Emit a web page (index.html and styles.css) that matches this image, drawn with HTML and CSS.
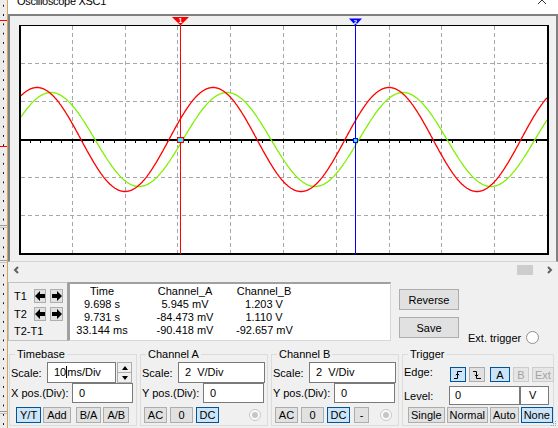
FILE: index.html
```html
<!DOCTYPE html>
<html>
<head>
    <meta charset="UTF-8">
    <title>Oscilloscope XSC1</title>
    <link rel="stylesheet" href="styles.css">
</head>
<body>
    <div class="canvas">
        <div class="wire wire-top"></div>
        <div class="wire wire-mid"></div>
        <div class="pin pin-1"></div>
        <div class="pin pin-2"></div>
        <div class="pin pin-3"></div>
    </div>

    <div class="window">
        <div class="titlebar">
            <span class="title">Oscilloscope XSC1</span>
            <svg class="close" width="10" height="4" viewBox="0 0 10 4"><path d="M0.5 4.5L5 0L9.5 4.5"/></svg>
        </div>

        <div class="screen">
            <svg class="scope" width="546" height="245" viewBox="10 16 546 245">
                <rect class="plot" x="19" y="25" width="530" height="230"/>
                <path class="grid" d="M72.5 26V253M125.5 26V253M177.5 26V253M230.5 26V253M283.5 26V253M336.5 26V253M389.5 26V253M441.5 26V253M494.5 26V253"/>
                <path class="grid" d="M21 63.5H547M21 101.5H547M21 177.5H547M21 215.5H547"/>
                <rect class="axis" x="21" y="139" width="526" height="2"/>
                <path id="ticks" class="ticks"/>
                <polyline id="waveB" class="wave-b"/>
                <polyline id="waveA" class="wave-a"/>
                <rect class="frame" x="19" y="25" width="530" height="1"/>
                <rect class="frame" x="19" y="25" width="2" height="230"/>
                <rect class="frame" x="547" y="25" width="2" height="230"/>
                <rect class="frame" x="19" y="253" width="530" height="2"/>

                <rect class="cur-1" x="180" y="17" width="1" height="237"/>
                <polygon class="cur-1" points="172,17 189,17 180.5,25.5"/>
                <text class="cur-num" x="180.5" y="23">1</text>
                <rect class="mark-1" x="177.5" y="137.5" width="6" height="5"/>

                <rect class="cur-2" x="355" y="19" width="1" height="235"/>
                <polygon class="cur-2" points="349,18.5 362,18.5 355.5,25.5"/>
                <text class="cur-num small" x="355.5" y="23.5">2</text>
                <rect class="mark-2" x="353.5" y="138.5" width="4" height="4"/>
            </svg>
        </div>

        <div class="hscroll">
            <svg class="chev" width="6" height="8" viewBox="0 0 6 8"><path d="M5 1L2 4L5 7"/></svg>
            <div class="thumb"></div>
            <svg class="chev chev-r" width="6" height="8" viewBox="0 0 6 8"><path d="M1 1L4 4L1 7"/></svg>
        </div>

        <div class="readout">
            <div class="cursors">
                <div class="crow">
                    <span class="clabel">T1</span>
                    <button class="arrow"><svg width="10" height="10" viewBox="0 0 10 10"><path d="M0 5L5 0V3H10V7H5V10Z"/></svg></button>
                    <button class="arrow"><svg width="10" height="10" viewBox="0 0 10 10"><path d="M10 5L5 0V3H0V7H5V10Z"/></svg></button>
                </div>
                <div class="crow">
                    <span class="clabel">T2</span>
                    <button class="arrow"><svg width="10" height="10" viewBox="0 0 10 10"><path d="M0 5L5 0V3H10V7H5V10Z"/></svg></button>
                    <button class="arrow"><svg width="10" height="10" viewBox="0 0 10 10"><path d="M10 5L5 0V3H0V7H5V10Z"/></svg></button>
                </div>
                <div class="cdiff">T2-T1</div>
            </div>

            <div class="values">
                <span>Time</span><span>Channel_A</span><span>Channel_B</span>
                <span>9.698 s</span><span>5.945 mV</span><span>1.203 V</span>
                <span>9.731 s</span><span>-84.473 mV</span><span>1.110 V</span>
                <span>33.144 ms</span><span>-90.418 mV</span><span>-92.657 mV</span>
            </div>

            <div class="actions">
                <button class="btn big">Reverse</button>
                <button class="btn big">Save</button>
            </div>

            <div class="ext"><span>Ext. trigger</span><span class="radio"></span></div>
        </div>

        <div class="controls">
            <fieldset class="group timebase">
                <legend>Timebase</legend>
                <div class="row row-scale">
                    <span class="lbl">Scale:</span>
                    <div class="field f-tb">10<span class="caret"></span>ms/Div</div>
                    <div class="spin"><span class="up"></span><span class="down"></span></div>
                </div>
                <div class="row row-pos">
                    <span class="lbl lbl-long">X pos.(Div):</span>
                    <div class="field f-pos">0</div>
                </div>
                <div class="row row-btns">
                    <button class="btn on">Y/T</button>
                    <button class="btn">Add</button>
                    <button class="btn sep">B/A</button>
                    <button class="btn">A/B</button>
                </div>
            </fieldset>

            <fieldset class="group channel">
                <legend>Channel A</legend>
                <div class="row row-scale">
                    <span class="lbl">Scale:</span>
                    <div class="field f-ch">2  V/Div</div>
                </div>
                <div class="row row-pos">
                    <span class="lbl lbl-long">Y pos.(Div):</span>
                    <div class="field f-pos">0</div>
                </div>
                <div class="row row-btns">
                    <button class="btn coupling">AC</button>
                    <button class="btn coupling">0</button>
                    <button class="btn coupling on">DC</button>
                    <span class="radio dis"></span>
                </div>
            </fieldset>

            <fieldset class="group channel">
                <legend>Channel B</legend>
                <div class="row row-scale">
                    <span class="lbl">Scale:</span>
                    <div class="field f-ch">2  V/Div</div>
                </div>
                <div class="row row-pos">
                    <span class="lbl lbl-long">Y pos.(Div):</span>
                    <div class="field f-pos">0</div>
                </div>
                <div class="row row-btns">
                    <button class="btn coupling">AC</button>
                    <button class="btn coupling">0</button>
                    <button class="btn coupling on">DC</button>
                    <button class="btn minus">-</button>
                    <span class="radio dis"></span>
                </div>
            </fieldset>

            <fieldset class="group trigger">
                <legend>Trigger</legend>
                <div class="row row-edge">
                    <span class="lbl lbl-trig">Edge:</span>
                    <button class="btn edge on"><svg width="10" height="11" viewBox="0 0 10 11"><path d="M1 9.5H4.5V2.5H9M2.8 6.2L4.5 4.5L6.2 6.2"/></svg></button>
                    <button class="btn edge"><svg width="10" height="11" viewBox="0 0 10 11"><path d="M1 2.5H4.5V9.5H9M2.8 5.8L4.5 7.5L6.2 5.8"/></svg></button>
                    <button class="btn src src-a on">A</button>
                    <button class="btn src off">B</button>
                    <button class="btn src off">Ext</button>
                </div>
                <div class="row row-level">
                    <span class="lbl lbl-trig">Level:</span>
                    <div class="field f-level">0</div>
                    <div class="field f-unit">V</div>
                </div>
                <div class="row row-btns">
                    <button class="btn mode">Single</button>
                    <button class="btn mode">Normal</button>
                    <button class="btn mode">Auto</button>
                    <button class="btn mode on">None</button>
                </div>
            </fieldset>
        </div>
    </div>

    <svg class="grip" width="7" height="7" viewBox="0 0 7 7">
        <rect x="5" y="1" width="1" height="1"/><rect x="3" y="3" width="1" height="1"/><rect x="5" y="3" width="1" height="1"/>
        <rect x="1" y="5" width="1" height="1"/><rect x="3" y="5" width="1" height="1"/><rect x="5" y="5" width="1" height="1"/>
    </svg>

    <script>
    // sine traces in page pixels: 10 ms/div, period ~ 3.33 div
    function wave(id, amp, zero) {
        var pts = [];
        for (var x = 21; x <= 547; x++) {
            var y = 139.5 - amp * Math.sin((x - zero) / 176 * 2 * Math.PI);
            pts.push(x + "," + y.toFixed(1));
        }
        document.getElementById(id).setAttribute("points", pts.join(" "));
    }
    wave("waveB", 47, 183);
    wave("waveA", 52, 169);

    var d = "";
    for (var k = 1; k < 50; k++) {
        var tx = Math.round(19 + k * 52.8 / 5) + 0.5;
        d += "M" + tx + " 141V143";
    }
    document.getElementById("ticks").setAttribute("d", d);
    </script>
</body>
</html>
```

FILE: styles.css
```css
* {
    box-sizing: border-box;
}

body {
    margin: 0;
    width: 558px;
    height: 428px;
    overflow: hidden;
    display: flex;
    position: relative;
    background: #f0f0f0;
    font-family: "Liberation Sans", Arial, sans-serif;
    font-size: 11px;
    color: #000;
}

/* schematic behind the window */
.canvas {
    flex: none;
    width: 7px;
    position: relative;
    background-color: #ececec;
    background-image: radial-gradient(circle at 3.5px 3.5px, #111 0.7px, transparent 1px);
    background-size: 7px 9.3px;
    background-position: 0 2px;
}

.wire {
    position: absolute;
    left: 0;
    width: 7px;
    height: 1px;
    background: #f00;
}

.wire-top { top: 20px; }
.wire-mid { top: 146px; }

.pin {
    position: absolute;
    left: 0;
    width: 7px;
    height: 3px;
    border-top: 1px solid #9a9a9a;
    border-bottom: 1px solid #c4c4c4;
}

.pin-1 { top: 225px; }
.pin-2 { top: 260px; }
.pin-3 { top: 411px; }

.window {
    flex: none;
    width: 551px;
    border-left: 1px solid #d9a15a;
    display: flex;
    flex-direction: column;
}

.titlebar {
    flex: none;
    height: 14px;
    background: #fff;
    display: flex;
    justify-content: space-between;
    overflow: hidden;
}

.title {
    margin: -6px 0 0 9px;
    line-height: 14px;
    letter-spacing: -0.3px;
}

.close {
    margin-right: 11px;
}

.close path {
    fill: none;
    stroke: #333;
    stroke-width: 1;
}

/* scope screen */
.screen {
    flex: none;
    height: 248px;
    border: 2px solid #808080;
    border-bottom: 1px solid #d4d4d4;
    background: #f0f0f0;
}

.scope {
    display: block;
}

.plot { fill: #fff; }
.frame { fill: #000; }
.axis { fill: #000; }

.grid {
    fill: none;
    stroke: #a8a8a8;
    stroke-width: 1;
    stroke-dasharray: 4 3;
    shape-rendering: crispEdges;
}

.ticks {
    stroke: #000;
    stroke-width: 1;
    shape-rendering: crispEdges;
}

.wave-a,
.wave-b {
    fill: none;
    stroke-width: 1.3;
}

.wave-a { stroke: #ff0000; }
.wave-b { stroke: #80f000; }

.cur-1 { fill: #ff0000; }
.cur-2 { fill: #0000ff; }

.cur-num {
    fill: #fff;
    font-size: 7px;
    font-weight: bold;
    text-anchor: middle;
}

.cur-num.small {
    font-size: 6px;
}

.mark-1 {
    fill: #40e0ff;
    stroke: #ff0000;
    stroke-width: 1;
}

.mark-2 {
    fill: #40e0ff;
    stroke: #0000ff;
    stroke-width: 1;
}

/* horizontal scroll */
.hscroll {
    flex: none;
    height: 15px;
    display: flex;
    align-items: center;
    padding: 0 5px;
}

.chev path {
    fill: none;
    stroke: #606060;
    stroke-width: 2;
}

.thumb {
    margin-left: auto;
    width: 16px;
    height: 10px;
    background: #cdcdcd;
}

.chev-r {
    margin-left: 14px;
}

/* cursor readout */
.readout {
    flex: none;
    display: flex;
    margin-top: 5px;
    height: 59px;
}

.cursors {
    width: 60px;
    border: 1px solid #c2c2c2;
    border-right-color: #a0a0a0;
    padding: 6px 0 0 5px;
}

.crow {
    display: flex;
    align-items: center;
    height: 14px;
    margin-bottom: 4px;
}

.clabel {
    width: 20px;
}

.arrow {
    width: 13px;
    height: 14px;
    margin-right: 4px;
    padding: 0;
    border: 1px solid #adadad;
    background: #e1e1e1;
    display: flex;
    align-items: center;
    justify-content: center;
}

.arrow svg {
    fill: #000;
}

.cdiff {
    line-height: 12px;
    margin-top: 0;
}

.values {
    width: 323px;
    background: #fff;
    border-top: 2px solid #a0a0a0;
    border-left: 2px solid #a0a0a0;
    border-right: 1px solid #d8d8d8;
    border-bottom: 1px solid #d8d8d8;
    padding-top: 1px;
    display: grid;
    grid-template-columns: 64px 102px 56px;
    grid-auto-rows: 13px;
    align-content: start;
    line-height: 13px;
    text-align: center;
    white-space: nowrap;
}

.actions {
    display: flex;
    flex-direction: column;
    gap: 7px;
    margin: 7px 0 0 8px;
}

.ext {
    display: flex;
    align-items: center;
    gap: 5px;
    margin: 49px 0 0 9px;
    height: 13px;
}

/* buttons */
.btn {
    font: inherit;
    color: #000;
    height: 16px;
    min-width: 15px;
    padding: 0 3px;
    border: 1px solid #adadad;
    background: #e1e1e1;
    line-height: 14px;
    text-align: center;
    flex: none;
}

.btn.big {
    width: 60px;
    height: 21px;
}

.btn.on {
    background: #cce4f7;
    border-color: #005499;
}

.btn.off {
    color: #a3a3a3;
    border-color: #cccccc;
    background: #e6e6e6;
}

.radio {
    flex: none;
    width: 13px;
    height: 13px;
    border-radius: 50%;
    border: 1px solid #8f8f8f;
    background: #fff;
}

.radio.dis {
    width: 12px;
    height: 12px;
    margin: 0 6px 0 auto;
    border-color: #c8c8c8;
    background: #fafafa;
    display: flex;
    align-items: center;
    justify-content: center;
}

.radio.dis::after {
    content: "";
    width: 6px;
    height: 6px;
    border-radius: 50%;
    background: #c6c6c6;
}

/* control groups */
.controls {
    flex: none;
    display: flex;
    margin-top: 7px;
}

.group {
    margin: 0 0 0 3px;
    padding: 0 0 2px 1px;
    border: 1px solid #dcdcdc;
    min-width: 0;
    width: 128px;
}

.timebase {
    margin-left: 1px;
}

.trigger {
    width: 152px;
}

legend {
    padding: 0 2px;
    margin-left: 4px;
    line-height: 13px;
}

.row {
    display: flex;
    align-items: center;
}

.row-scale {
    height: 21px;
    margin-top: 1px;
}

.row-pos {
    height: 20px;
}

.row-btns {
    height: 16px;
    margin-top: 4px;
    gap: 2px;
}

.lbl {
    flex: none;
    width: 36px;
}

.lbl-long {
    width: 61px;
}

.lbl-trig {
    width: 45px;
}

.field {
    flex: none;
    height: 100%;
    background: #fff;
    border: 1px solid #7a7a7a;
    padding: 0 0 1px 6px;
    display: flex;
    align-items: center;
    white-space: pre;
}

.f-tb { width: 69px; }
.f-ch { width: 87px; }
.f-pos { width: 61px; }
.f-level { width: 71px; padding-left: 5px; }
.f-unit { width: 29px; padding-left: 8px; }

.caret {
    width: 1px;
    height: 12px;
    background: #000;
}

.spin {
    flex: none;
    width: 15px;
    height: 100%;
    margin-left: 1px;
    border: 1px solid #adadad;
    background: #f0f0f0;
    display: flex;
    flex-direction: column;
}

.spin span {
    flex: 1;
    display: flex;
    align-items: center;
    justify-content: center;
}

.spin .up {
    border-bottom: 1px solid #adadad;
}

.spin .up::after {
    content: "";
    border-left: 3.5px solid transparent;
    border-right: 3.5px solid transparent;
    border-bottom: 4px solid #000;
}

.spin .down::after {
    content: "";
    border-left: 3.5px solid transparent;
    border-right: 3.5px solid transparent;
    border-top: 4px solid #000;
}

.timebase .row-btns {
    padding-left: 5px;
}

.timebase .btn {
    min-width: 24px;
}

.btn.sep {
    margin-left: 3px;
}

.channel .row-btns {
    padding-left: 2px;
    gap: 3px;
}

.btn.coupling {
    width: 23px;
    padding: 0;
}

.btn.minus {
    margin-left: 1px;
}

.row-edge {
    height: 21px;
    margin-top: 1px;
    align-items: flex-end;
    padding-bottom: 1px;
    gap: 3px;
}

.row-edge .lbl {
    align-self: center;
    margin-right: -2px;
}

.btn.edge {
    width: 16px;
    height: 15px;
    padding: 0;
    display: flex;
    align-items: center;
    justify-content: center;
}

.edge path {
    fill: none;
    stroke: #000;
    stroke-width: 1;
}

.btn.src {
    height: 15px;
    min-width: 16px;
    padding: 0 2px;
}

.btn.src-a {
    width: 20px;
    margin-left: 2px;
}

.row-level {
    height: 19px;
    margin-top: 3px;
}

.trigger .row-btns {
    margin-top: 2px;
    padding-left: 4px;
}

.btn.mode {
    padding: 0 2px;
}

.grip {
    position: absolute;
    right: 1px;
    bottom: 1px;
    fill: #a0a0a0;
}
```
